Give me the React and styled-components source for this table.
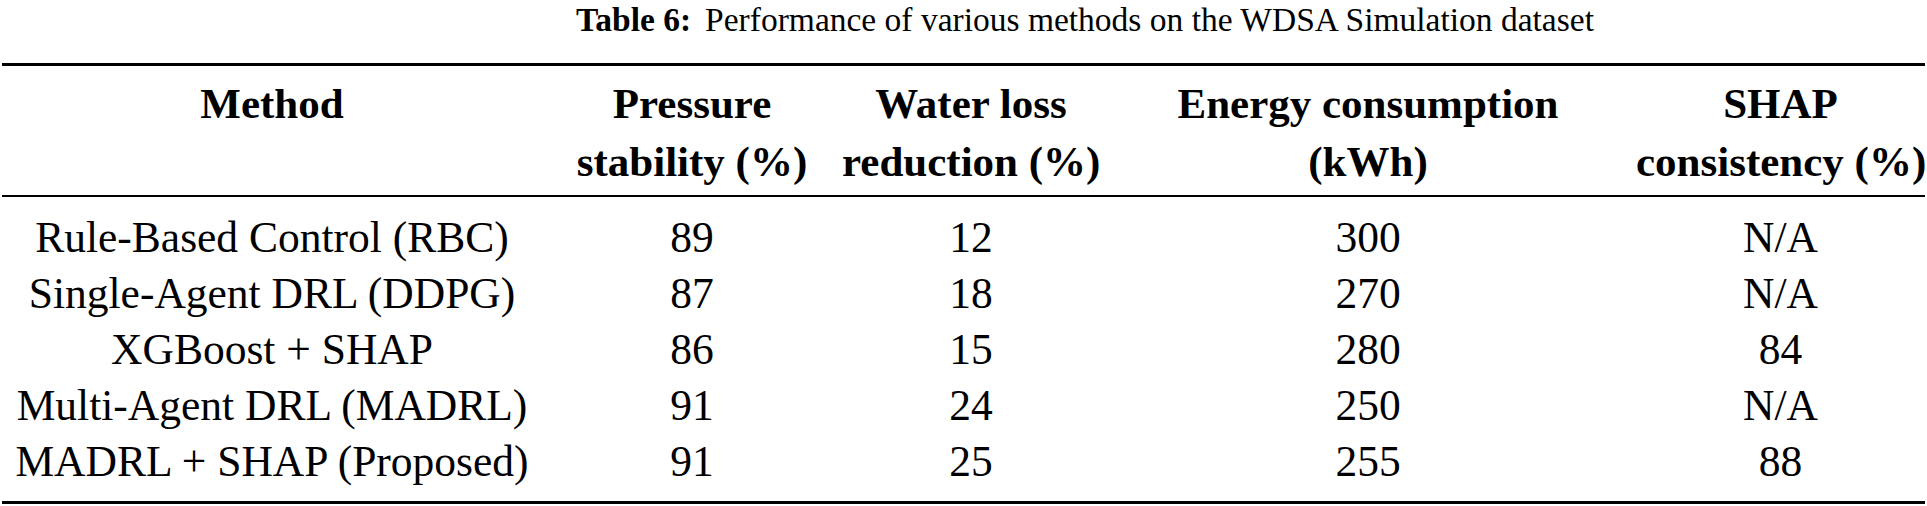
import React from "react";
import styled, { createGlobalStyle } from "styled-components";

const Global = createGlobalStyle`
  html, body { margin: 0; padding: 0; background: #ffffff; }
  body { font-family: "Liberation Serif", "Times New Roman", serif; color: #000; }
`;

const Page = styled.div`
  width: 1927px;
  height: 506px;
  padding-left: 2px;
  box-sizing: border-box;
  background: #fff;
  overflow: hidden;
`;

const Caption = styled.div`
  height: 63px;
  box-sizing: border-box;
  padding-left: 574px;
  padding-top: 0px;
  font-size: 33.5px;
  line-height: 40px;
  white-space: nowrap;
`;

const CaptionLabel = styled.b`
  font-weight: 700;
  margin-right: 14px;
`;

const Table = styled.div`
  width: 1923px;
  display: grid;
  grid-template-columns: 540px 300px 258px 536px 289px;
`;

const Rule = styled.div`
  grid-column: 1 / -1;
  height: ${(p) => p.$h}px;
  background: #000;
`;

const HeadCell = styled.div`
  font-weight: 700;
  font-size: 43px;
  line-height: 58px;
  text-align: center;
  padding: 9px 0 4px;
  white-space: nowrap;
`;

const HeadLine = styled.div`
  letter-spacing: ${(p) => p.$ls || 0}px;
`;

const BodyCell = styled.div`
  font-size: 43.5px;
  line-height: 56px;
  height: 56px;
  text-align: center;
  white-space: nowrap;
  padding-top: ${(p) => (p.$top ? 12 : 0)}px;
  padding-bottom: ${(p) => (p.$bottom ? 12 : 0)}px;
`;

const headers = [
  ["Method"],
  ["Pressure", "stability (%)"],
  ["Water loss", "reduction (%)"],
  ["Energy consumption", "(kWh)"],
  ["SHAP", "consistency (%)"],
];

const rows = [
  ["Rule-Based Control (RBC)", "89", "12", "300", "N/A"],
  ["Single-Agent DRL (DDPG)", "87", "18", "270", "N/A"],
  ["XGBoost + SHAP", "86", "15", "280", "84"],
  ["Multi-Agent DRL (MADRL)", "91", "24", "250", "N/A"],
  ["MADRL + SHAP (Proposed)", "91", "25", "255", "88"],
];

export default function App() {
  return (
    <>
      <Global />
      <Page>
        <Caption>
          <CaptionLabel>Table 6:</CaptionLabel>
          Performance of various methods on the WDSA Simulation dataset
        </Caption>
        <Table>
          <Rule $h={3} />
          {headers.map((h, i) => (
            <HeadCell key={i}>
              {h.map((line, j) => (
                <HeadLine key={j}>{line}</HeadLine>
              ))}
            </HeadCell>
          ))}
          <Rule $h={2} />
          {rows.map((r, ri) =>
            r.map((c, ci) => (
              <BodyCell
                key={ri + "-" + ci}
                $top={ri === 0}
                $bottom={ri === rows.length - 1}
              >
                {c}
              </BodyCell>
            ))
          )}
          <Rule $h={3} />
        </Table>
      </Page>
    </>
  );
}
